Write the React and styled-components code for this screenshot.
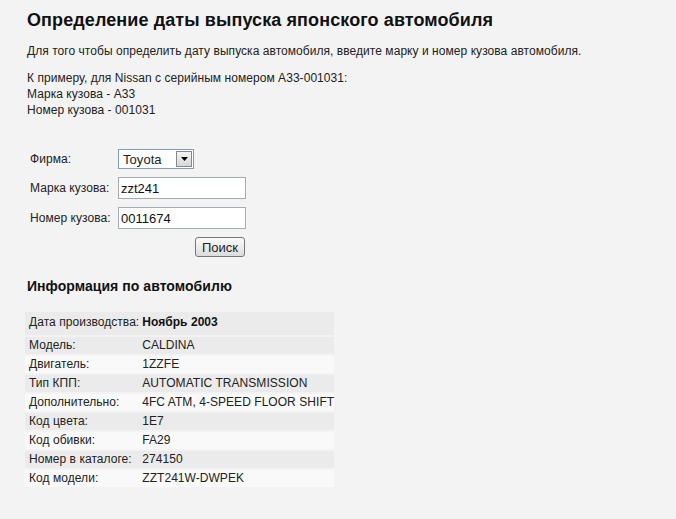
import React from 'react';
import styled, { createGlobalStyle } from 'styled-components';

const Global = createGlobalStyle`
  html, body {
    margin: 0;
    padding: 0;
    background: #f3f3f3;
  }
  body {
    font-family: Arial, "Liberation Sans", sans-serif;
    font-size: 12px;
    letter-spacing: 0.05px;
    color: #222;
  }
`

const Page = styled.div`
  padding: 10px 0 0 27px;
  min-height: 519px;
  box-sizing: border-box;
`

const Title = styled.h1`
  font-size: 18px;
  font-weight: 700;
  letter-spacing: 0.1px;
  margin: 0 0 12px 0;
  color: #111;
`

const Text = styled.p`
  margin: 0 0 11px 0;
  line-height: 16px;
`

const Form = styled.div`
  display: grid;
  grid-template-columns: 88px auto;
  row-gap: 8px;
  margin-top: 31px;
  margin-left: 3px;
  width: 216px;
  align-items: center;
`

const Label = styled.div`
  font-size: 12px;
`

const Select = styled.div`
  display: flex;
  align-items: center;
  justify-content: space-between;
  width: 76px;
  height: 20px;
  box-sizing: border-box;
  border: 1px solid #7f9db9;
  background: #fff;
  padding-left: 4px;
  font-size: 13px;
`

const DropBtn = styled.div`
  width: 16px;
  height: 16px;
  margin-right: 1px;
  box-sizing: border-box;
  border: 1px solid #888;
  background: linear-gradient(#f4f4f4, #d8d8d8);
  display: flex;
  align-items: center;
  justify-content: center;
`

const Input = styled.input`
  width: 128px;
  height: 22px;
  box-sizing: border-box;
  border: 1px solid #a5acb2;
  background: #fff;
  padding: 0 2px;
  font-family: Arial, "Liberation Sans", sans-serif;
  font-size: 13px;
  color: #111;
  outline: none;
`

const ButtonRow = styled.div`
  grid-column: 2;
  display: flex;
  justify-content: flex-end;
  padding-right: 1px;
`

const Button = styled.button`
  height: 20px;
  padding: 0 6px;
  border: 1px solid #777;
  border-radius: 3px;
  background: linear-gradient(#fafafa, #dcdcdc);
  font-family: Arial, "Liberation Sans", sans-serif;
  font-size: 13px;
  color: #222;
`

const Subtitle = styled.h2`
  font-size: 14px;
  font-weight: 700;
  margin: 21px 0 18px 0;
  color: #111;
`

const Info = styled.div`
  display: grid;
  grid-template-columns: auto auto;
  row-gap: 2px;
  width: 308px;
  margin-left: -2px;
`

const Row = styled.div`
  display: contents;
  & > div {
    background: ${p => (p.$light ? '#f9f9f9' : '#ebebeb')};
    height: ${p => (p.$first ? '21px' : '17px')};
    line-height: ${p => (p.$first ? '21px' : '17px')};
    padding-bottom: ${p => (p.$first ? '2px' : '0')};
    white-space: nowrap;
  }
  & > div:first-child {
    padding-left: 4px;
    padding-right: 3px;
  }
  & > div:last-child {
    font-weight: ${p => (p.$first ? 700 : 400)};
    color: ${p => (p.$first ? '#111' : '#222')};
  }
`

const Cell = styled.div``

const rows = [
  ['Модель:', 'CALDINA'],
  ['Двигатель:', '1ZZFE'],
  ['Тип КПП:', 'AUTOMATIC TRANSMISSION'],
  ['Дополнительно:', '4FC ATM, 4-SPEED FLOOR SHIFT'],
  ['Код цвета:', '1E7'],
  ['Код обивки:', 'FA29'],
  ['Номер в каталоге:', '274150'],
  ['Код модели:', 'ZZT241W-DWPEK'],
];

export default function App() {
  return (
    <Page>
      <Global />
      <Title>Определение даты выпуска японского автомобиля</Title>
      <Text>Для того чтобы определить дату выпуска автомобиля, введите марку и номер кузова автомобиля.</Text>
      <Text>
        К примеру, для Nissan с серийным номером A33-001031:<br />
        Марка кузова - A33<br />
        Номер кузова - 001031
      </Text>
      <Form>
        <Label>Фирма:</Label>
        <Select>
          Toyota
          <DropBtn>
            <svg width="7" height="4" viewBox="0 0 7 4"><path d="M0 0h7L3.5 4z" fill="#000" /></svg>
          </DropBtn>
        </Select>
        <Label>Марка кузова:</Label>
        <Input defaultValue="zzt241" />
        <Label>Номер кузова:</Label>
        <Input defaultValue="0011674" />
        <ButtonRow>
          <Button>Поиск</Button>
        </ButtonRow>
      </Form>
      <Subtitle>Информация по автомобилю</Subtitle>
      <Info>
        <Row $first>
          <Cell>Дата производства:</Cell>
          <Cell>Ноябрь 2003</Cell>
        </Row>
        {rows.map(([k, v], i) => (
          <Row key={k} $light={i % 2 === 1}>
            <Cell>{k}</Cell>
            <Cell>{v}</Cell>
          </Row>
        ))}
      </Info>
    </Page>
  );
}
